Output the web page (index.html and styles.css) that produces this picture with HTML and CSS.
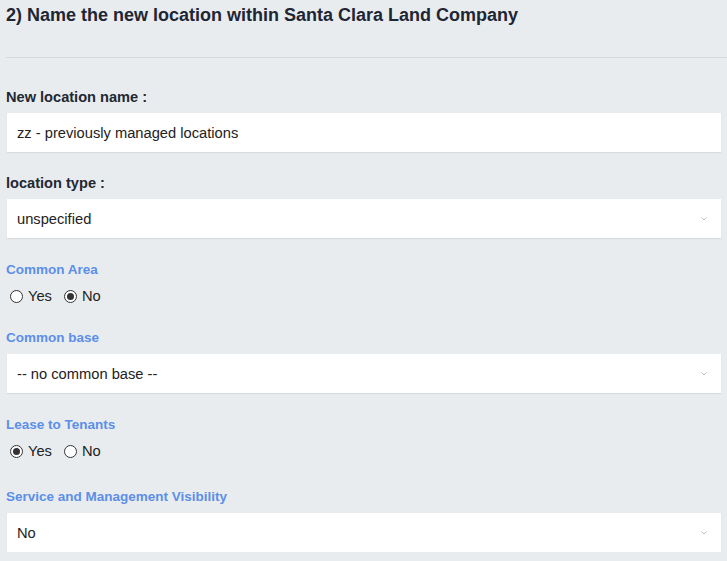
FILE: index.html
```html
<!DOCTYPE html>
<html>
<head>
<meta charset="utf-8">
<link rel="stylesheet" href="styles.css">
</head>
<body>
<div class="page">
  <h2 class="title">2) Name the new location within Santa Clara Land Company</h2>
  <hr class="divider">

  <div class="field first">
    <label class="label">New location name :</label>
    <div class="box">zz - previously managed locations</div>
  </div>

  <div class="field">
    <label class="label">location type :</label>
    <div class="box select"><span>unspecified</span><svg class="chev" width="6" height="4" viewBox="0 0 6 4"><path d="M0.5 0.5 L3 3 L5.5 0.5" fill="none" stroke="#b8bcc4" stroke-width="1"/></svg></div>
  </div>

  <div class="field tight">
    <label class="label blue">Common Area</label>
    <div class="radios">
      <span class="radio"></span><span class="rtext">Yes</span>
      <span class="radio on"></span><span class="rtext">No</span>
    </div>
  </div>

  <div class="field loose">
    <label class="label blue">Common base</label>
    <div class="box select"><span>-- no common base --</span><svg class="chev" width="6" height="4" viewBox="0 0 6 4"><path d="M0.5 0.5 L3 3 L5.5 0.5" fill="none" stroke="#b8bcc4" stroke-width="1"/></svg></div>
  </div>

  <div class="field tight">
    <label class="label blue">Lease to Tenants</label>
    <div class="radios">
      <span class="radio on"></span><span class="rtext">Yes</span>
      <span class="radio"></span><span class="rtext">No</span>
    </div>
  </div>

  <div class="field wide">
    <label class="label blue">Service and Management Visibility</label>
    <div class="box select"><span>No</span><svg class="chev" width="6" height="4" viewBox="0 0 6 4"><path d="M0.5 0.5 L3 3 L5.5 0.5" fill="none" stroke="#b8bcc4" stroke-width="1"/></svg></div>
  </div>
</div>
</body>
</html>
```
FILE: styles.css
```css
html, body {
  margin: 0;
  padding: 0;
  background: #e9ecef;
  font-family: "Liberation Sans", Arial, sans-serif;
  color: #222;
}
.page {
  padding: 5px 6px 0 6px;
}
.title {
  margin: 0;
  font-size: 18px;
  line-height: 21px;
  font-weight: bold;
  color: #1e2633;
}
.divider {
  border: none;
  border-top: 1px solid #d5d9de;
  margin: 31px -6px 0 0;
  height: 0;
}
.field {
  display: flex;
  flex-direction: column;
  margin-top: 21px;
}
.field.first {
  margin-top: 29px;
}
.field.tight {
  margin-top: 22px;
}
.field.loose {
  margin-top: 22px;
}
.field.wide {
  margin-top: 26px;
}
.label {
  display: block;
  font-size: 14.6px;
  line-height: 20px;
  font-weight: bold;
  color: #222831;
  margin-bottom: 6px;
}
.label.blue {
  font-size: 13.5px;
  color: #5b8fe8;
}
.box {
  background: #fff;
  height: 39px;
  margin-left: 1px;
  box-shadow: 0 1px 1px rgba(0, 0, 0, 0.07);
  display: flex;
  align-items: center;
  padding: 0 11px 0 10px;
  font-size: 14.7px;
  color: #222;
}
.select {
  justify-content: space-between;
}
.chev {
  margin-right: 3px;
}
.radios {
  display: flex;
  align-items: center;
  height: 20px;
  font-size: 14.7px;
  color: #222;
}
.radio {
  width: 11px;
  height: 11px;
  border: 1px solid #333;
  border-radius: 50%;
  background: #fff;
  margin-left: 4px;
  margin-right: 5px;
  position: relative;
  box-sizing: content-box;
}
.radio.on::after {
  content: "";
  position: absolute;
  left: 2px;
  top: 2px;
  width: 7px;
  height: 7px;
  border-radius: 50%;
  background: #333;
}
.rtext {
  margin-right: 8px;
}
```
